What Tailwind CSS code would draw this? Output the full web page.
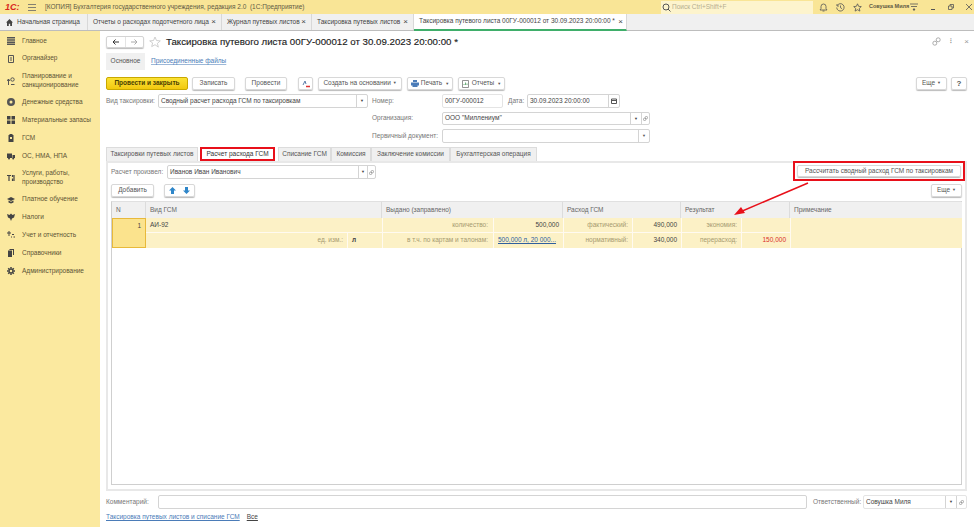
<!DOCTYPE html>
<html lang="ru">
<head>
  <meta charset="UTF-8">
  <title>Таксировка путевого листа</title>
  <script src="https://cdn.jsdelivr.net/npm/@tailwindcss/browser@4"></script>
</head>
<body class="w-[974px] h-[527px] overflow-hidden bg-white font-['Liberation_Sans',Arial,sans-serif] text-[6.5px] leading-none text-[#555]">

  <!-- заголовок окна -->
  <header class="h-[14px] bg-[#f9e596] flex items-center relative">
    <span class="ml-[5px] w-[14px] text-[9px] font-bold italic text-[#d8261c]">1С:</span>
    <svg class="ml-[9px] w-[8px] h-[7px]" viewBox="0 0 8 7" fill="none" stroke="#666" stroke-width=".8"><path d="M0 .5h8M0 3.500h8M0 6.500h8"/></svg>
    <span class="ml-[9px] text-[#5f5a45] whitespace-nowrap">[КОПИЯ] Бухгалтерия государственного учреждения, редакция 2.0&nbsp; (1С:Предприятие)</span>
    <div class="ml-auto flex items-center h-[13px]">
      <div class="w-[152px] h-[13px] bg-[#fdf4cd] flex items-center pl-[1px] text-[#b5ad90]">
        <svg class="w-[9px] h-[9px] mr-[1px]" viewBox="0 0 9 9" fill="none" stroke="#555" stroke-width="1"><circle cx="4" cy="4" r="3"/><path d="M6 6l2.500 2.500"/></svg>
        Поиск Ctrl+Shift+F
      </div>
      <svg class="ml-[6px] w-[9px] h-[9px]" viewBox="0 0 9 9" fill="none" stroke="#555" stroke-width=".8"><path d="M1 7h7L7 5.500V3.500a2.500 2.500 0 0 0-5 0v2zM3.500 8h2"/></svg>
      <svg class="ml-[8px] w-[9px] h-[9px]" viewBox="0 0 9 9" fill="none" stroke="#555" stroke-width=".8"><path d="M1.200 2.500a3.700 3.700 0 1 1-.5 2M1 1v2h2M4.500 2.500v2.200l1.500 1"/></svg>
      <svg class="ml-[8px] w-[9px] h-[9px]" viewBox="0 0 9 9" fill="none" stroke="#555" stroke-width=".8"><path d="M4.500.8l1.100 2.500 2.700.3-2 1.800.6 2.700-2.400-1.400-2.400 1.400.6-2.700-2-1.800 2.700-.3z"/></svg>
      <span class="ml-[7px] w-[38px] text-[5.500px] font-bold whitespace-nowrap text-[#5f5a45]">Совушка Миля</span>
      <svg class="ml-[3px] w-[8px] h-[8px]" viewBox="0 0 8 8" fill="none" stroke="#555" stroke-width=".8"><path d="M0 1h8M1 3.500h6"/><path d="M3 6h2L4 7.500z" fill="#555"/></svg>
      <span class="ml-[13px] w-[4px] h-[1px] bg-[#555] mt-[4px]"></span>
      <svg class="ml-[13px] w-[6px] h-[6px]" viewBox="0 0 6 6" fill="none" stroke="#555" stroke-width=".8"><path d="M.5 2h3.500v3.500H.5zM2 2V.5h3.500V4H4"/></svg>
      <svg class="ml-[12px] mr-[2px] w-[6px] h-[6px]" viewBox="0 0 6 6" fill="none" stroke="#555" stroke-width=".8"><path d="M0 0l6 6M6 0L0 6"/></svg>
    </div>
  </header>

  <!-- открытые вкладки -->
  <nav class="h-[17px] bg-[#f0f0f0] border-b border-[#bdbdbd] flex text-[#444] whitespace-nowrap">
    <div class="w-[88px] shrink-0 flex items-center pl-[6px] border-r border-[#d8d8d8]">
      <svg class="w-[7px] h-[7px] mr-[4px]" viewBox="0 0 7 7" fill="#444"><path d="M3.500 0L7 3.500H6V7H4.200V4.800H2.800V7H1V3.500H0z"/></svg>
      Начальная страница
    </div>
    <div class="w-[134px] shrink-0 flex items-center justify-between px-[5px] border-r border-[#d8d8d8]">Отчеты о расходах подотчетного лица <span class="text-[8px]">×</span></div>
    <div class="w-[90px] shrink-0 flex items-center justify-between px-[5px] border-r border-[#d8d8d8]">Журнал путевых листов <span class="text-[8px]">×</span></div>
    <div class="w-[102px] shrink-0 flex items-center justify-between px-[5px] border-r border-[#d8d8d8]">Таксировка путевых листов <span class="text-[8px]">×</span></div>
    <div class="w-[213px] shrink-0 flex items-center justify-between pl-[5px] pr-[3px] bg-white border-b-2 border-[#3fae6a] border-r border-r-[#d8d8d8] h-[17px]">Таксировка путевого листа 00ГУ-000012 от 30.09.2023 20:00:00 * <span class="text-[8px]">×</span></div>
  </nav>

  <div class="flex h-[496px]">
    <!-- разделы -->
    <aside class="w-[100px] shrink-0 bg-[#fbe99f] pt-[1px] text-[#5b5335]">
      <div class="h-[17.800px] flex items-center pl-[7px] gap-[7px]"><svg class="w-[8px] h-[8px]" viewBox="0 0 8 8" fill="#555"><path d="M0 0h8v1.500H0zM0 2.200h8v1.500H0zM0 4.400h8v1.500H0zM0 6.500h8V8H0z"/></svg>Главное</div>
      <div class="h-[17.800px] flex items-center pl-[7px] gap-[7px]"><svg class="w-[8px] h-[8px]" viewBox="0 0 8 8" fill="none" stroke="#555"><path d="M1.500.5h5v7h-5zM3 3h2M3 5h2"/></svg>Органайзер</div>
      <div class="h-[26px] flex items-center pl-[7px] gap-[7px]"><svg class="w-[8px] h-[8px] shrink-0" viewBox="0 0 8 8" fill="none" stroke="#555"><path d="M1.500 2v6M0 4l1.500-2L3 4"/><circle cx="5.500" cy="2.500" r="1.700"/><path d="M4 7.500h3.500"/></svg><span class="leading-[8.500px]">Планирование и<br>санкционирование</span></div>
      <div class="h-[17.800px] flex items-center pl-[7px] gap-[7px]"><svg class="w-[8px] h-[8px]" viewBox="0 0 8 8"><circle cx="4" cy="4" r="4" fill="#555"/><circle cx="4" cy="4" r="1.500" fill="#fbe99f"/></svg>Денежные средства</div>
      <div class="h-[17.800px] flex items-center pl-[7px] gap-[7px]"><svg class="w-[8px] h-[8px]" viewBox="0 0 8 8" fill="#444"><path d="M0 0h3.500v3.500H0zM4.500 0H8v3.500H4.500zM0 4.500h3.500V8H0zM4.500 4.500H8V8H4.500z"/></svg>Материальные запасы</div>
      <div class="h-[17.800px] flex items-center pl-[7px] gap-[7px]"><svg class="w-[8px] h-[8px]" viewBox="0 0 8 8" fill="#444"><path d="M1.500 1h1V0h3v1h1v7h-5zM3 3v2h2V3z"/></svg>ГСМ</div>
      <div class="h-[17.800px] flex items-center pl-[7px] gap-[7px]"><svg class="w-[8px] h-[8px]" viewBox="0 0 8 8" fill="#444"><path d="M0 1.500h5v4.500H0zM5.500 3H8v3H5.500z"/><circle cx="2" cy="6.500" r="1"/><circle cx="6.200" cy="6.500" r="1"/></svg>ОС, НМА, НПА</div>
      <div class="h-[26px] flex items-center pl-[7px] gap-[7px]"><svg class="w-[8px] h-[8px] shrink-0" viewBox="0 0 8 8" fill="none" stroke="#444" stroke-width="1.200"><path d="M0 1.500h4M2 1.500V7M5.500 1v2M5.500 4.500V7M7 1v6"/></svg><span class="leading-[8.500px]">Услуги, работы,<br>производство</span></div>
      <div class="h-[17.800px] flex items-center pl-[7px] gap-[7px]"><svg class="w-[8px] h-[8px]" viewBox="0 0 8 8" fill="#444"><path d="M4 1l4 2-4 2-4-2zM1.500 4.500L4 5.800l2.500-1.300V6.500L4 7.500l-2.500-1z"/></svg>Платное обучение</div>
      <div class="h-[17.800px] flex items-center pl-[7px] gap-[7px]"><svg class="w-[8px] h-[8px]" viewBox="0 0 8 8" fill="#444"><path d="M0 1l2.500 1L4 .5 5.500 2 8 1 7 4.500 5 5.500 4 8 3 5.500 1 4.500z"/></svg>Налоги</div>
      <div class="h-[17.800px] flex items-center pl-[7px] gap-[7px]"><svg class="w-[8px] h-[8px]" viewBox="0 0 8 8" fill="none" stroke="#444"><path d="M0 2h4M2 0v5M4 6h1M6.500 6h1.500M5 3.500h2"/></svg>Учет и отчетность</div>
      <div class="h-[17.800px] flex items-center pl-[7px] gap-[7px]"><svg class="w-[8px] h-[8px]" viewBox="0 0 8 8" fill="#444"><path d="M2.500 0H7v6H6V1H2.500zM1 1.500h4V8H1z"/></svg>Справочники</div>
      <div class="h-[17.800px] flex items-center pl-[7px] gap-[7px]"><svg class="w-[8px] h-[8px]" viewBox="0 0 8 8" fill="none" stroke="#444" stroke-width="1.500"><circle cx="4" cy="4" r="2"/><path d="M4 0v1.500M4 6.500V8M0 4h1.500M6.500 4H8M1.200 1.200l1 1M5.800 5.800l1 1M6.800 1.200l-1 1M2.200 5.800l-1 1"/></svg>Администрирование</div>
    </aside>

    <!-- форма документа -->
    <main class="relative flex-1 pl-[6px] pr-[7px] pt-[3px]">
      <!-- шапка -->
      <div class="h-[15px] flex items-center">
        <div class="w-[38px] h-[12px] rounded-[2px] border border-[#d4d4d4] shadow-[0_1px_1px_#bbb] flex items-center">
          <span class="w-[19px] h-full border-r border-[#e4e4e4] flex items-center justify-center"><svg class="w-[7px] h-[6px]" viewBox="0 0 7 6" fill="none" stroke="#333" stroke-width="1"><path d="M7 3H1M3.500.5L1 3l2.500 2.500"/></svg></span>
          <span class="w-[18px] h-full flex items-center justify-center"><svg class="w-[7px] h-[6px]" viewBox="0 0 7 6" fill="none" stroke="#aaa" stroke-width="1"><path d="M0 3h6M3.500.5L6 3 3.500 5.500"/></svg></span>
        </div>
        <svg class="ml-[5px] w-[12px] h-[12px]" viewBox="0 0 12 12" fill="none" stroke="#c4c4c4" stroke-width=".8"><path d="M6 1l1.500 3.500 3.800.4-2.900 2.500.9 3.700L6 8.700l-3.300 1.900.9-3.700L.7 4.900l3.800-.4z"/></svg>
        <h1 class="ml-[5px] text-[9.700px] font-normal text-[#222] [-webkit-text-stroke:0.15px_#222] whitespace-nowrap">Таксировка путевого листа 00ГУ-000012 от 30.09.2023 20:00:00 *</h1>
        <div class="ml-auto flex items-center mr-[-2px]">
          <svg class="w-[9px] h-[9px]" viewBox="0 0 9 9" fill="none" stroke="#999" stroke-width=".8"><circle cx="2.800" cy="6.200" r="2"/><circle cx="6.200" cy="2.800" r="2"/></svg>
          <span class="ml-[9px] text-[#777] font-bold">⁝</span>
          <span class="ml-[12px] text-[#999] text-[8px]">×</span>
        </div>
      </div>

      <!-- закладки формы -->
      <div class="mt-[4px] h-[17px] flex items-center">
        <div class="w-[39px] h-[17px] bg-[#f0f0f0] flex items-center justify-center">Основное</div>
        <a class="ml-[6px] text-[#4b7cb8] underline decoration-[#9db8d8]">Присоединенные файлы</a>
      </div>

      <!-- командная панель -->
      <div class="mt-[7px] h-[13px] flex text-[#555]">
        <button class="w-[82px] rounded-[2px] border border-[#c9a800] bg-linear-to-b from-[#fbe233] to-[#f2c90c] font-bold text-[#4a4000]">Провести и закрыть</button>
        <button class="ml-[4px] w-[43px] rounded-[2px] border border-[#d8d8d8] shadow-[0_1px_1px_#bbb]">Записать</button>
        <button class="ml-[10px] w-[42px] rounded-[2px] border border-[#d8d8d8] shadow-[0_1px_1px_#bbb]">Провести</button>
        <button class="ml-[11px] w-[15px] rounded-[2px] border border-[#d8d8d8] shadow-[0_1px_1px_#bbb] flex items-center justify-center"><svg class="w-[8px] h-[8px]" viewBox="0 0 8 8" fill="none"><path d="M1 5l2-4 1 3" stroke="#5a7ca8"/><path d="M4 6.500h4" stroke="#d33" stroke-width="1.500"/></svg></button>
        <button class="ml-[5px] w-[84px] rounded-[2px] border border-[#d8d8d8] shadow-[0_1px_1px_#bbb]">Создать на основании <span class="text-[4px] align-middle">▼</span></button>
        <button class="ml-[5px] w-[46px] rounded-[2px] border border-[#d8d8d8] shadow-[0_1px_1px_#bbb] flex items-center justify-center gap-[2px]"><svg class="w-[8px] h-[7px]" viewBox="0 0 8 7" fill="#4b7cb8"><path d="M2 0h4v2H2zM0 2.500h8v3H6.500V7h-5V5.500H0z"/></svg>Печать <span class="text-[4px] ml-[1px]">▼</span></button>
        <button class="ml-[5px] w-[47px] rounded-[2px] border border-[#d8d8d8] shadow-[0_1px_1px_#bbb] flex items-center justify-center gap-[3px]"><svg class="w-[7px] h-[8px]" viewBox="0 0 7 8" fill="none" stroke="#777" stroke-width=".8"><path d="M.5.500h6v7h-6z"/><path d="M2 5V4M3.500 5V2.500M5 5V3.500" stroke="#4a9a5a"/></svg>Отчеты <span class="text-[4px]">▼</span></button>
        <button class="ml-auto w-[31px] rounded-[2px] border border-[#d8d8d8] shadow-[0_1px_1px_#bbb]">Еще <span class="text-[4px] align-middle">▼</span></button>
        <button class="ml-[4px] w-[16px] rounded-[2px] border border-[#d8d8d8] shadow-[0_1px_1px_#bbb] font-bold text-[8px]">?</button>
      </div>

      <!-- реквизиты -->
      <div class="mt-[4px] h-[14px] flex items-center">
        <label class="w-[52px] text-[#777] whitespace-nowrap">Вид таксировки:</label>
        <div class="w-[210px] h-[14px] flex items-center rounded-[2px] border border-[#d4d4d4] pl-[2px] justify-between text-[#444]">Сводный расчет расхода ГСМ по таксировкам<span class="w-[11px] h-full border-l border-[#d4d4d4] flex items-center justify-center text-[4px]">▼</span></div>
        <label class="ml-[4px] w-[70px] text-[#777]">Номер:</label>
        <div class="w-[61px] h-[14px] flex items-center rounded-[2px] border border-[#e4e4e4] pl-[2px] text-[#444]">00ГУ-000012</div>
        <label class="ml-[5px] w-[19px] text-[#777]">Дата:</label>
        <div class="w-[93px] h-[14px] flex items-center rounded-[2px] border border-[#d4d4d4] pl-[2px] justify-between text-[#444]">30.09.2023 20:00:00<span class="w-[11px] h-full border-l border-[#d4d4d4] flex items-center justify-center"><svg class="w-[6px] h-[6px]" viewBox="0 0 6 6" fill="none" stroke="#555"><path d="M.5 1h5v4.500h-5zM.5 2.500h5"/></svg></span></div>
      </div>
      <div class="mt-[4px] h-[13px] flex items-center pl-[266px]">
        <label class="w-[70px] text-[#777]">Организация:</label>
        <div class="w-[208px] h-[13px] flex items-center rounded-[2px] border border-[#d4d4d4] pl-[2px] justify-between text-[#444]">ООО "Миллениум"<span class="flex h-full"><span class="w-[11px] border-l border-[#d4d4d4] flex items-center justify-center text-[4px]">▼</span><span class="w-[8px] border-l border-[#d4d4d4] flex items-center justify-center"><svg class="w-[5px] h-[5px]" viewBox="0 0 5 5" fill="none" stroke="#888" stroke-width=".7"><circle cx="1.600" cy="3.400" r="1.200"/><circle cx="3.400" cy="1.600" r="1.200"/></svg></span></span></div>
      </div>
      <div class="mt-[4px] h-[14px] flex items-center pl-[266px]">
        <label class="w-[70px] text-[#777] whitespace-nowrap">Первичный документ:</label>
        <div class="w-[208px] h-[14px] flex items-center rounded-[2px] border border-[#d4d4d4] justify-end"><span class="w-[11px] h-full border-l border-[#d4d4d4] flex items-center justify-center text-[4px]">▼</span></div>
      </div>

      <!-- закладки таблицы -->
      <div class="mt-[4px] h-[14px] flex text-[#555] whitespace-nowrap">
        <div class="w-[92px] bg-[#f0f0f0] border border-[#dcdcdc] border-b-0 flex items-center justify-center">Таксировки путевых листов</div>
        <div class="ml-[2px] w-[75px] bg-white border-2 border-[#e8101a] flex items-center justify-center text-[#333]">Расчет расхода ГСМ</div>
        <div class="ml-[3px] w-[53px] bg-[#f0f0f0] border border-[#dcdcdc] border-b-0 flex items-center justify-center">Списание ГСМ</div>
        <div class="w-[40px] bg-[#f0f0f0] border border-[#dcdcdc] border-b-0 flex items-center justify-center">Комиссия</div>
        <div class="w-[79px] bg-[#f0f0f0] border border-[#dcdcdc] border-b-0 flex items-center justify-center">Заключение комиссии</div>
        <div class="w-[87px] bg-[#f0f0f0] border border-[#dcdcdc] border-b-0 flex items-center justify-center">Бухгалтерская операция</div>
      </div>

      <section class="w-[861px] h-[330px] border-2 border-[#e8e8e8] px-[3px] pt-[2px]">
        <div class="h-[14px] flex items-center">
          <label class="w-[56px] text-[#777] whitespace-nowrap">Расчет произвел:</label>
          <div class="w-[209px] h-[14px] flex items-center rounded-[2px] border border-[#d4d4d4] pl-[2px] justify-between text-[#444]">Иванов Иван Иванович<span class="flex h-full"><span class="w-[9px] border-l border-[#d4d4d4] flex items-center justify-center text-[4px]">▼</span><span class="w-[8px] border-l border-[#d4d4d4] flex items-center justify-center"><svg class="w-[5px] h-[5px]" viewBox="0 0 5 5" fill="none" stroke="#888" stroke-width=".7"><circle cx="1.600" cy="3.400" r="1.200"/><circle cx="3.400" cy="1.600" r="1.200"/></svg></span></span></div>
          <button class="ml-auto w-[172px] h-[20px] -mt-[2px] mr-[-3px] border-2 border-[#e8101a] p-[2px] shrink-0">
            <span class="h-full flex items-center justify-center rounded-[2px] border border-[#d8d8d8] shadow-[0_1px_1px_#bbb] text-[#555] whitespace-nowrap">Рассчитать сводный расход ГСМ по таксировкам</span>
          </button>
        </div>
        <div class="mt-[5px] h-[13px] flex">
          <button class="w-[43px] rounded-[2px] border border-[#d8d8d8] shadow-[0_1px_1px_#bbb]">Добавить</button>
          <div class="ml-[10px] w-[31px] rounded-[2px] border border-[#d8d8d8] shadow-[0_1px_1px_#bbb] flex items-center justify-around">
            <svg class="w-[7px] h-[7px]" viewBox="0 0 7 7" fill="#2f86c9"><path d="M3.500 0L7 3.500H5V7H2V3.500H0z"/></svg>
            <svg class="w-[7px] h-[7px]" viewBox="0 0 7 7" fill="#2f86c9"><path d="M3.500 7L7 3.500H5V0H2v3.500H0z"/></svg>
          </div>
          <button class="ml-auto w-[31px] rounded-[2px] border border-[#d8d8d8] shadow-[0_1px_1px_#bbb]">Еще <span class="text-[4px] align-middle">▼</span></button>
        </div>

        <!-- табличная часть -->
        <div class="mt-[4px] h-[284px] w-[851px] border border-[#cfcfcf] border-t-[#e0e0e0]">
          <div class="grid grid-cols-[34px_201px_35px_111px_70px_69px_49px_60px_49px_172px] grid-rows-[16px_15px_15px] text-[#666]">
            <div class="bg-[#f0f0f0] border-r border-[#dcdcdc] flex items-center pl-[4px]">N</div>
            <div class="col-span-2 bg-[#f0f0f0] border-r border-[#dcdcdc] flex items-center pl-[4px]">Вид ГСМ</div>
            <div class="col-span-2 bg-[#f0f0f0] border-r border-[#dcdcdc] flex items-center pl-[4px]">Выдано (заправлено)</div>
            <div class="col-span-2 bg-[#f0f0f0] border-r border-[#dcdcdc] flex items-center pl-[4px]">Расход ГСМ</div>
            <div class="col-span-2 bg-[#f0f0f0] border-r border-[#dcdcdc] flex items-center pl-[4px]">Результат</div>
            <div class="bg-[#f0f0f0] flex items-center pl-[4px]">Примечание</div>

            <div class="row-span-2 bg-[#fbe38d] border border-[#e8b93a] flex justify-end pr-[4px] pt-[4px] text-[#444]">1</div>
            <div class="col-span-2 bg-[#fcf1c6] border-b border-[#fffaf0] flex items-center pl-[4px] text-[#444]">АИ-92</div>
            <div class="bg-[#fcf1c6] border-l border-b border-[#fffaf0] flex items-center justify-end pr-[5px] text-[#a69a70]">количество:</div>
            <div class="bg-[#fcf1c6] border-l border-b border-[#fffaf0] flex items-center justify-end pr-[4px] text-[#444]">500,000</div>
            <div class="bg-[#fcf1c6] border-l border-b border-[#fffaf0] flex items-center justify-end pr-[4px] text-[#a69a70]">фактический:</div>
            <div class="bg-[#fcf1c6] border-l border-b border-[#fffaf0] flex items-center justify-end pr-[4px] text-[#444]">490,000</div>
            <div class="bg-[#fcf1c6] border-l border-b border-[#fffaf0] flex items-center justify-end pr-[4px] text-[#a69a70]">экономия:</div>
            <div class="bg-[#fcf1c6] border-l border-b border-[#fffaf0]"></div>
            <div class="row-span-2 bg-[#fcf1c6] border-l border-[#fffaf0]"></div>

            <div class="bg-[#fcf1c6] flex items-center justify-end pr-[4px] text-[#a69a70]">ед. изм.:</div>
            <div class="bg-[#fcf1c6] border-l border-[#fffaf0] flex items-center pl-[4px] font-bold text-[#444]">л</div>
            <div class="bg-[#fcf1c6] border-l border-[#fffaf0] flex items-center justify-end pr-[5px] text-[#a69a70]">в т.ч. по картам и талонам:</div>
            <div class="bg-[#fcf1c6] border-l border-[#fffaf0] flex items-center pl-[4px] text-[#2f5f9e] underline">500,000 л, 20 000...</div>
            <div class="bg-[#fcf1c6] border-l border-[#fffaf0] flex items-center justify-end pr-[4px] text-[#a69a70]">нормативный:</div>
            <div class="bg-[#fcf1c6] border-l border-[#fffaf0] flex items-center justify-end pr-[4px] text-[#444]">340,000</div>
            <div class="bg-[#fcf1c6] border-l border-[#fffaf0] flex items-center justify-end pr-[4px] text-[#a69a70]">перерасход:</div>
            <div class="bg-[#fcf1c6] border-l border-[#fffaf0] flex items-center justify-end pr-[4px] text-[#d9302a]">150,000</div>
          </div>
        </div>
      </section>

      <!-- подвал -->
      <div class="mt-[4px] h-[14px] flex items-center">
        <label class="w-[52px] text-[#777]">Комментарий:</label>
        <div class="w-[649px] h-[14px] rounded-[2px] border border-[#d4d4d4]"></div>
        <label class="ml-[6px] w-[50px] text-[#777] whitespace-nowrap">Ответственный:</label>
        <div class="w-[104px] h-[14px] flex items-center rounded-[2px] border border-[#e4e4e4] pl-[2px] justify-between text-[#444]">Совушка Миля<span class="flex h-full"><span class="w-[11px] border-l border-[#d4d4d4] flex items-center justify-center text-[4px]">▼</span><span class="w-[10px] border-l border-[#d4d4d4] flex items-center justify-center"><svg class="w-[5px] h-[5px]" viewBox="0 0 5 5" fill="none" stroke="#888" stroke-width=".7"><circle cx="1.600" cy="3.400" r="1.200"/><circle cx="3.400" cy="1.600" r="1.200"/></svg></span></span></div>
      </div>
      <div class="mt-[5px] flex gap-[7px]">
        <a class="text-[#4b7cb8] underline">Таксировка путевых листов и списание ГСМ</a>
        <a class="text-[#444] underline">Все</a>
      </div>

      <!-- стрелка-пометка -->
      <svg class="absolute left-[628px] top-[150px] w-[82px] h-[40px] pointer-events-none" viewBox="0 0 82 40" fill="none">
        <path d="M80 2L12 31" stroke="#e8101a" stroke-width="1.500"/>
        <path d="M6 34l7-8 4 6z" fill="#e8101a"/>
      </svg>
    </main>
  </div>
</body>
</html>
